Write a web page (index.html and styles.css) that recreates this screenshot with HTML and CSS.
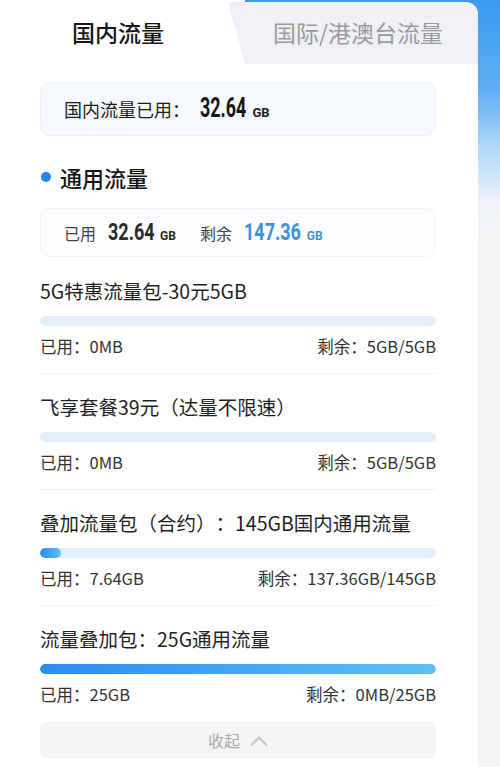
FILE: index.html
```html
<!DOCTYPE html>
<html lang="zh-CN">
<head>
  <meta charset="UTF-8" />
  <meta name="viewport" content="width=device-width, initial-scale=1.0" />
  <title>流量查询</title>
  <link rel="stylesheet" href="styles.css">
</head>
<body>
  <div class="page">
    <div class="card">
      <div class="tabs">
        <div class="tab active">国内流量</div>
        <div class="tab other">国际/港澳台流量</div>
      </div>

      <div class="content">
        <div class="summary">
          国内流量已用：<span class="num big">32.64</span><span class="unit">GB</span>
        </div>

        <h2 class="section-title"><span class="dot"></span>通用流量</h2>

        <div class="usage">
          <span class="label">已用</span>
          <span class="num short">32.64</span><span class="unit small">GB</span>
          <span class="label left-gap">剩余</span>
          <span class="num long blue">147.36</span><span class="unit small blue">GB</span>
        </div>

        <div class="packs">
          <div class="pack">
            <div class="pack-name">5G特惠流量包-30元5GB</div>
            <div class="bar"><div class="fill" style="width: 0%"></div></div>
            <div class="pack-info">
              <span>已用：0MB</span>
              <span>剩余：5GB/5GB</span>
            </div>
          </div>

          <div class="pack">
            <div class="pack-name">飞享套餐39元（达量不限速）</div>
            <div class="bar"><div class="fill" style="width: 0%"></div></div>
            <div class="pack-info">
              <span>已用：0MB</span>
              <span>剩余：5GB/5GB</span>
            </div>
          </div>

          <div class="pack">
            <div class="pack-name">叠加流量包（合约）：145GB国内通用流量</div>
            <div class="bar"><div class="fill" style="width: 5.3%"></div></div>
            <div class="pack-info">
              <span>已用：7.64GB</span>
              <span>剩余：137.36GB/145GB</span>
            </div>
          </div>

          <div class="pack">
            <div class="pack-name">流量叠加包：25G通用流量</div>
            <div class="bar"><div class="fill" style="width: 100%"></div></div>
            <div class="pack-info">
              <span>已用：25GB</span>
              <span>剩余：0MB/25GB</span>
            </div>
          </div>
        </div>

        <button class="collapse">收起
          <svg width="18" height="11" viewBox="0 0 18 11"><polyline points="2,9.5 9,2.5 16,9.5" fill="none" stroke="#c6c6c6" stroke-width="2.2" stroke-linecap="round" stroke-linejoin="round"/></svg>
        </button>
      </div>
    </div>
  </div>
</body>
</html>
```

FILE: styles.css
```css
body {
  margin: 0;
  padding: 0;
  font-family: "Noto Sans CJK SC", sans-serif;
  background: linear-gradient(to bottom, #3a9bf2 0, #5eaff4 90px, #b4daf8 150px, #eef3f8 205px, #f5f5f5 250px);
  color: #222;
  text-spacing-trim: space-all;
}
.page {
  display: flex;
  min-height: 767px;
}
.card {
  width: 478px;
  display: flex;
  flex-direction: column;
}
.tabs {
  display: flex;
  height: 64px;
}
.tab {
  font-size: 23px;
  line-height: 64px;
}
.tab.active {
  flex: 0 0 245px;
  background: #fff;
  color: #151515;
  padding-left: 72px;
  box-sizing: border-box;
  font-weight: 500;
}
.tab.other {
  flex: 1;
  margin-left: -17px;
  margin-top: 2px;
  line-height: 60px;
  padding-left: 45px;
  background: #eff1f7;
  color: #9a9a9a;
  border-top-right-radius: 12px;
  clip-path: polygon(0 0, 100% 0, 100% 100%, 17px 100%);
}
.content {
  flex: 1;
  background: #fff;
  padding: 18px 42px 8px 40px;
}
.summary {
  height: 54px;
  box-sizing: border-box;
  line-height: 50px;
  padding-left: 23px;
  background: #f5f8fc;
  border: 1px solid #edf1f6;
  border-radius: 10px;
  font-size: 18px;
  color: #1c1c1c;
}
.num {
  display: inline-block;
  font-family: Roboto, sans-serif;
  font-weight: bold;
  font-size: 24px;
  color: #2a2a2a;
  transform-origin: left center;
  transform: scaleX(0.75);
  margin-left: 12px;
}
.num.short {
  margin-right: -15px;
}
.num.long {
  margin-right: -18px;
}
.num.big {
  font-size: 28px;
  color: #151515;
  transform: scaleX(0.64);
  margin-left: 10px;
  margin-right: -25px;
}
.unit {
  font-family: Roboto, sans-serif;
  font-weight: bold;
  font-size: 13px;
  color: #222;
  margin-left: 5px;
}
.unit.small {
  font-size: 12px;
  color: #2a2a2a;
  margin-left: 5px;
}
.num.blue, .unit.blue {
  color: #3f8fd9;
}
.section-title {
  margin: 26px 0 0 0;
  font-size: 22px;
  line-height: 30px;
  font-weight: 500;
  color: #151515;
  display: flex;
  align-items: center;
}
.dot {
  width: 10px;
  height: 10px;
  border-radius: 50%;
  background: #1e88f0;
  margin: 0 9px 0 1px;
}
.usage {
  margin-top: 16px;
  height: 49px;
  box-sizing: border-box;
  display: flex;
  align-items: baseline;
  padding: 9px 0 0 23px;
  background: #fcfdfe;
  border: 1px solid #f1f4f8;
  border-radius: 10px;
}
.label {
  font-size: 16px;
  color: #444;
}
.left-gap {
  margin-left: 24px;
}
.packs {
  margin-top: 1px;
}
.pack {
  padding: 19px 0 15px 0;
  border-bottom: 1px solid #f1f1f1;
}
.pack:last-child {
  border-bottom: none;
}
.pack-name {
  font-size: 19.5px;
  line-height: 28px;
  color: #1f1f1f;
}
.bar {
  margin-top: 11px;
  height: 10px;
  border-radius: 5px;
  background: #e4eefb;
  overflow: hidden;
}
.fill {
  height: 100%;
  border-radius: 5px;
  background: linear-gradient(to right, #2c8bf0, #5ec0f6);
}
.pack-info {
  margin-top: 8px;
  display: flex;
  justify-content: space-between;
  font-size: 16.5px;
  line-height: 24px;
  color: #333;
}
.collapse {
  width: 100%;
  height: 38px;
  border: none;
  border-radius: 8px;
  background: #f5f5f5;
  color: #a9a9a9;
  font-family: inherit;
  font-size: 16px;
  display: flex;
  align-items: center;
  justify-content: center;
  gap: 10px;
  padding: 0;
}
```
